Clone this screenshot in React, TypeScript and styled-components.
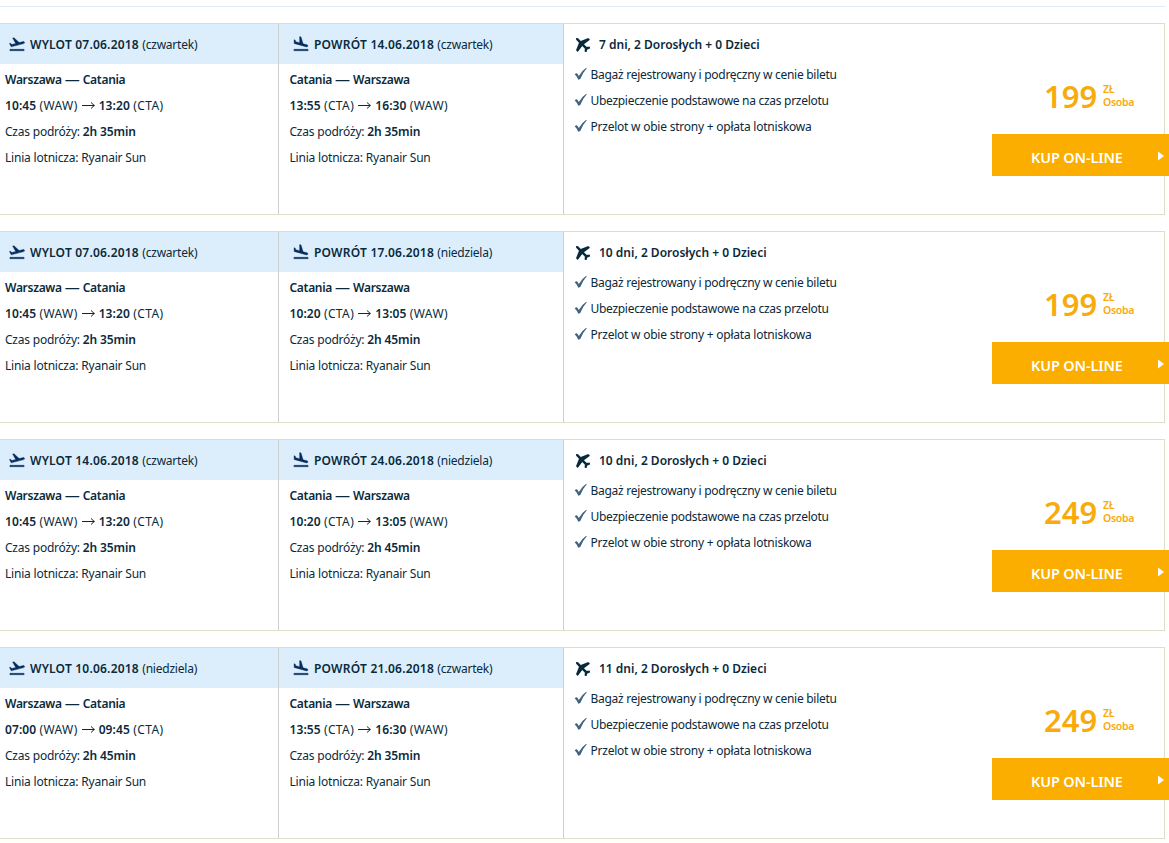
import React, { FC } from "react";
import styled, { createGlobalStyle } from 'styled-components';
import { MdFlightTakeoff, MdFlightLand } from 'react-icons/md';

interface Leg {
  date: string;
  day: string;
  from: string;
  to: string;
  fromCode: string;
  toCode: string;
  start: string;
  end: string;
  duration: string;
}

interface Offer {
  outbound: Leg;
  inbound: Leg;
  days: number;
  price: number;
}

const GlobalStyle = createGlobalStyle`
  * {
    box-sizing: border-box;
  }
  body {
    margin: 0;
    background: #fff;
    color: #092a3c;
    font-family: 'Noto Sans', 'Open Sans', sans-serif;
    font-size: 12px;
    overflow: hidden;
  }
`;

const Page = styled.main`
  width: 1169px;
  height: 843px;
  padding-top: 6px;
  overflow: hidden;
`;

const TopLine = styled.div`
  width: 1165px;
  height: 1px;
  margin-bottom: 16px;
  background: #e2ecf2;
`;

const Card = styled.article`
  display: grid;
  grid-template-columns: 279px 285px 600px;
  width: 1165px;
  height: 192px;
  margin-bottom: 16px;
  border: 1px solid #dedfc6;
  border-left: 0;
`;

const Column = styled.section`
  border-right: 1px solid #cbd0d2;
`;

const ColumnHeader = styled.header<{ $indent: number }>`
  display: flex;
  align-items: center;
  height: 40px;
  padding-left: ${props => props.$indent}px;
  padding-top: 1px;
  background: #dceefb;
  white-space: pre;

  svg {
    flex: none;
    width: 18px;
    height: 18px;
    margin-right: 4px;
    margin-top: -2px;
    color: #092a5e;
  }
  svg path:not([fill='none']) {
    stroke: #092a5e;
    stroke-width: 0.45px;
  }
`;

const Lines = styled.div<{ $indent: number }>`
  padding: 3px 0 0 ${props => props.$indent}px;
  line-height: 26px;
  white-space: pre;
`;

const Line = styled.div`
  display: flex;
  height: 26px;
`;

const Bold = styled.span<{ $spacing?: number }>`
  font-weight: 600;
  letter-spacing: ${props => props.$spacing ?? 0}px;
`;

const Light = styled.span<{ $spacing?: number }>`
  letter-spacing: ${props => props.$spacing ?? -0.22}px;
`;

const Dash = styled.span`
  margin: 0 3px;
  font-size: 15px;
  font-weight: 400;
  line-height: 24px;
`;

const Arrow = styled.svg`
  width: 13px;
  height: 26px;
  margin: 0 4px;
`;

const Summary = styled.section`
  display: flex;
  justify-content: space-between;
`;

const Details = styled.div`
  padding-left: 11px;
  white-space: pre;
`;

const DetailsTitle = styled.div`
  display: flex;
  align-items: center;
  height: 38px;
  padding-top: 3px;

  svg {
    width: 14px;
    height: 14px;
    margin: 0 9px 0 1px;
  }
`;

const Benefit = styled.div`
  display: flex;
  height: 26px;
  line-height: 26px;

  svg {
    width: 13px;
    height: 14px;
    margin: 5px 3.5px 0 -1px;
  }
`;

const Purchase = styled.div`
  width: 172px;
  padding-top: 57px;
`;

const PriceRow = styled.div`
  display: flex;
  height: 53px;
  padding-left: 52px;
  color: #f8ab0d;
`;

const Amount = styled.span`
  width: 59px;
  margin-top: -2px;
  font-size: 31px;
  line-height: 34px;
  font-weight: 600;
`;

const Unit = styled.span`
  padding-top: 2px;
  font-size: 10.5px;
  letter-spacing: -0.3px;
  line-height: 13px;
  font-weight: 600;
`;

const BuyButton = styled.button`
  display: flex;
  align-items: center;
  width: 177px;
  height: 42px;
  padding: 4px 0 0 39px;
  border: 0;
  background: #fbae00;
  color: #fff;
  font: 600 14.5px 'Noto Sans', sans-serif;
  letter-spacing: -0.15px;
  text-align: left;
  white-space: nowrap;

  span {
    width: 127px;
  }
  svg {
    flex: none;
    width: 6px;
    height: 10px;
    margin-top: -3px;
  }
`;

const benefits = [
  { text: 'Bagaż rejestrowany i podręczny w cenie biletu', spacing: -0.28 },
  { text: 'Ubezpieczenie podstawowe na czas przelotu', spacing: -0.29 },
  { text: 'Przelot w obie strony + opłata lotniskowa', spacing: -0.23 },
];

const outbound = (date: string, day: string, start = '10:45', end = '13:20', duration = '2h 35min'): Leg => ({
  date, day, start, end, duration, from: 'Warszawa', to: 'Catania', fromCode: 'WAW', toCode: 'CTA',
});

const inbound = (date: string, day: string, start: string, end: string, duration: string): Leg => ({
  date, day, start, end, duration, from: 'Catania', to: 'Warszawa', fromCode: 'CTA', toCode: 'WAW',
});

const offers: Offer[] = [
  {
    outbound: outbound('07.06.2018', 'czwartek'),
    inbound: inbound('14.06.2018', 'czwartek', '13:55', '16:30', '2h 35min'),
    days: 7,
    price: 199,
  },
  {
    outbound: outbound('07.06.2018', 'czwartek'),
    inbound: inbound('17.06.2018', 'niedziela', '10:20', '13:05', '2h 45min'),
    days: 10,
    price: 199,
  },
  {
    outbound: outbound('14.06.2018', 'czwartek'),
    inbound: inbound('24.06.2018', 'niedziela', '10:20', '13:05', '2h 45min'),
    days: 10,
    price: 249,
  },
  {
    outbound: outbound('10.06.2018', 'niedziela', '07:00', '09:45', '2h 45min'),
    inbound: inbound('21.06.2018', 'czwartek', '13:55', '16:30', '2h 35min'),
    days: 11,
    price: 249,
  },
];

const LegColumn: FC<{ leg: Leg; isReturn?: boolean }> = ({ leg, isReturn }) => (
  <Column>
    <ColumnHeader $indent={isReturn ? 13 : 8}>
      {isReturn ? <MdFlightLand /> : <MdFlightTakeoff />}
      <Bold $spacing={0.21}>{isReturn ? 'POWRÓT' : 'WYLOT'} {leg.date} </Bold>
      <Light>({leg.day})</Light>
    </ColumnHeader>
    <Lines $indent={isReturn ? 10.5 : 5}>
      <Line>
        <Bold $spacing={-0.3}>{leg.from}</Bold>
        <Dash>—</Dash>
        <Bold $spacing={-0.3}>{leg.to}</Bold>
      </Line>
      <Line>
        <Bold $spacing={0.08}>{leg.start} </Bold>
        <Light $spacing={0.4}>({leg.fromCode})</Light>
        <Arrow viewBox="0 0 13 26" fill="none" stroke="currentColor">
          <path d="M0 12.5H12.5M9 9.5l3.3 3-3.3 3" />
        </Arrow>
        <Bold $spacing={0.1}>{leg.end} </Bold>
        <Light $spacing={0.4}>({leg.toCode})</Light>
      </Line>
      <Line><Light>Czas podróży: </Light><Bold $spacing={-0.1}>{leg.duration}</Bold></Line>
      <Line><Light $spacing={-0.2}>Linia lotnicza: Ryanair Sun</Light></Line>
    </Lines>
  </Column>
);

const OfferCard: FC<{ offer: Offer }> = ({ offer }) => (
  <Card>
    <LegColumn leg={offer.outbound} />
    <LegColumn leg={offer.inbound} isReturn />
    <Summary>
      <Details>
        <DetailsTitle>
          <svg viewBox="0 0 16 16" fill="currentColor">
            <path d="M12 10 9.1 7.1 16 2 14 0 5.4 3.4 2.7.7C1.9-.1.8-.3.3.3s-.4 1.6.4 2.4l2.7 2.7L0 14l2 2 5.1-6.9L10 12v4h2l1-3 3-1v-2Z" />
          </svg>
          <Bold>{offer.days} dni, 2 Dorosłych + 0 Dzieci</Bold>
        </DetailsTitle>
        {benefits.map(({ text, spacing }) => (
          <Benefit key={text}>
            <svg viewBox="0 0 13 14" fill="#426482">
              <path d="M.7 7.3Q2.6 5.4 3.6 7L4.8 9Q7.6 3.8 12.3.7L12.8 1.2Q8.6 5.8 6.3 12L4.2 12.7Q2.7 9.2.7 7.3Z" />
            </svg>
            <Light $spacing={spacing}>{text}</Light>
          </Benefit>
        ))}
      </Details>
      <Purchase>
        <PriceRow>
          <Amount>{offer.price}</Amount>
          <Unit>ZŁ<br />Osoba</Unit>
        </PriceRow>
        <BuyButton>
          <span>KUP ON-LINE</span>
          <svg viewBox="0 0 6 10" fill="currentColor"><path d="M0 0.5 6 5 0 9.5Z" /></svg>
        </BuyButton>
      </Purchase>
    </Summary>
  </Card>
);

const App: FC = () => (
  <>
    <GlobalStyle />
    <Page>
      <TopLine />
      {offers.map((offer, index) => <OfferCard key={index} offer={offer} />)}
    </Page>
  </>
);

export default App;
